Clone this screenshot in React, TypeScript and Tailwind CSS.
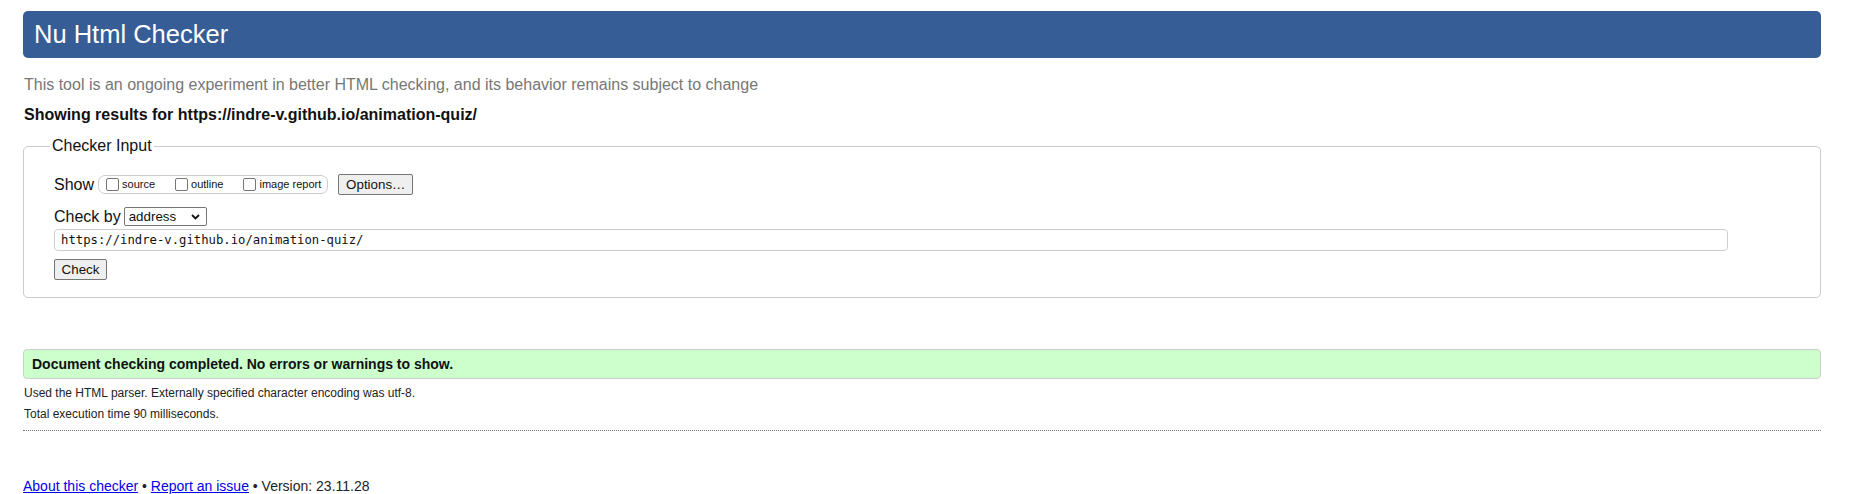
import React from 'react';

const Box = ({ label }: { label: string }) => (
  <span className="flex items-center">
    <span className="block w-[13px] h-[13px] border border-[#767676] rounded-[2px] bg-white" />
    <span className="ml-[3px] text-[11px] leading-[13px]">{label}</span>
  </span>
);

export default function App() {
  return (
    <div className="min-h-screen bg-white pt-[11px] font-['Liberation_Sans',Arial,sans-serif] text-[#111]">
      <div className="ml-[23px] w-[1798px]">
        {/* Header bar */}
        <header className="h-[47px] rounded-[5px] bg-[#365d95] flex items-center px-[11px]">
          <h1 className="text-[25.5px] leading-none text-white font-normal">Nu Html Checker</h1>
        </header>

        <p className="mt-[18px] pl-[1px] text-[16px] leading-[18px] text-[#777]">
          This tool is an ongoing experiment in better HTML checking, and its behavior remains subject to change
        </p>
        <p className="mt-[12px] pl-[1px] text-[16px] leading-[18px] font-bold">
          Showing results for https://indre-v.github.io/animation-quiz/
        </p>

        {/* Checker input */}
        <fieldset className="mt-[13px] border border-[#ccc] rounded-[5px] pl-[30px] pb-[17px]">
          <legend className="ml-[-4px] px-[2px] text-[16px] leading-[18px]">Checker Input</legend>

          <div className="mt-[19px] flex items-center h-[21px]">
            <span className="text-[16px] leading-[18px]">Show</span>
            <div className="ml-[4px] h-[19px] flex items-center gap-[20px] border border-[#ccc] rounded-[7px] pl-[7px] pr-[6px]">
              <Box label="source" />
              <Box label="outline" />
              <Box label="image report" />
            </div>
            <button className="ml-[10px] h-[21px] w-[75px] bg-[#efefef] border border-[#767676] rounded-[2px] text-[13.33px] leading-none">
              Options…
            </button>
          </div>

          <div className="mt-[12px] flex items-center h-[19px]">
            <span className="text-[16px] leading-[18px]">Check by</span>
            <div className="ml-[3px] h-[19px] w-[83px] border border-[#767676] rounded-[2px] flex items-center justify-between pl-[4px] pr-[6px] bg-white">
              <span className="text-[13.33px] leading-none">address</span>
              <svg width="9" height="6" viewBox="0 0 9 6" fill="none">
                <path d="M1 1l3.5 3.5L8 1" stroke="#111" strokeWidth="1.8" />
              </svg>
            </div>
          </div>

          <div className="mt-[3px] h-[22px] w-[1674px] border border-[#ccc] rounded-[4px] flex items-center pl-[6px]">
            <span className="font-['DejaVu_Sans_Mono',monospace] text-[12.25px] leading-none">
              https://indre-v.github.io/animation-quiz/
            </span>
          </div>

          <button className="mt-[8px] block h-[21px] w-[53px] bg-[#efefef] border border-[#767676] rounded-[2px] text-[13.33px] leading-none">
            Check
          </button>
        </fieldset>

        {/* Result */}
        <div className="mt-[51px] border border-[#ccc] rounded-[4px] bg-[#ccffcc] pl-[8px] pt-[6px] pb-[5px]">
          <p className="text-[14px] leading-[17px] font-bold">Document checking completed. No errors or warnings to show.</p>
        </div>
        <p className="mt-[7px] pl-[1px] text-[12px] leading-[14px] text-[#222]">
          Used the HTML parser. Externally specified character encoding was utf-8.
        </p>
        <p className="mt-[7px] pl-[1px] text-[12px] leading-[14px] text-[#222]">Total execution time 90 milliseconds.</p>
        <hr className="mt-[9px] border-0 border-t border-dotted border-[#777]" />

        <p className="mt-[47px] text-[14px] leading-[16px] text-[#222]">
          <a href="#" className="text-[#0000ee] underline">About this checker</a>
          {' • '}
          <a href="#" className="text-[#0000ee] underline">Report an issue</a>
          {' • Version: 23.11.28'}
        </p>
      </div>
    </div>
  );
}
